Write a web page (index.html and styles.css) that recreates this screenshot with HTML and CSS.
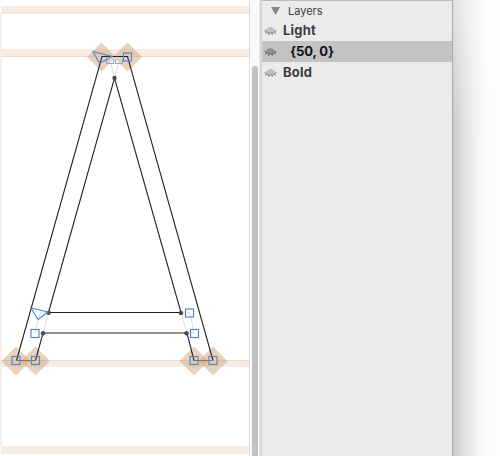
FILE: index.html
```html
<!DOCTYPE html>
<html lang="en">
<head>
<meta charset="utf-8">
<title>Glyph Editor</title>
<link rel="stylesheet" href="styles.css">
</head>
<body>
<div class="app">
  <svg class="canvas" width="249" height="456" viewBox="0 0 249 456">
    <defs>
      <path id="zone" d="M0-14.500 14.500 0 0 14.500-14.500 0z"/>
      <rect id="node" x="-4" y="-4" width="8" height="8"/>
    </defs>
    <g class="band">
      <rect x="1" y="6" width="249" height="7"/>
      <rect x="1" y="49" width="249" height="7"/>
      <rect x="1" y="361" width="249" height="6"/>
      <rect x="1" y="448" width="249" height="6"/>
    </g>
    <rect class="side" x="0" y="13" width="2" height="434"/>
    <path class="metric" d="M1 13H250M1 56.500H250M1 360.500H250M1 447H250"/>
    <g class="zones">
      <use href="#zone" x="101.500" y="57"/><use href="#zone" x="127.500" y="57"/>
      <use href="#zone" x="16" y="361"/><use href="#zone" x="35.500" y="361"/>
      <use href="#zone" x="194" y="361"/><use href="#zone" x="213" y="361"/>
    </g>
    <path class="ghost" d="M110.500 61.500 114.500 78 119 61.500M48.500 313H40L35 333M48.500 313 43 333M181 313 187 333M190 313 194 333M181 313H190M187 333H194"/>
    <path class="outline" d="M16.500 360.500 102 56.500H127.500L213 360.500M194 360.500 187 333H43L35.500 360.500M48.500 312.500 114.500 78 181 312.500Z"/>
    <path class="foot" d="M16.500 360.500H35.500M194 360.500H213"/>
    <g class="dots"><circle cx="114.500" cy="78" r="2.200"/><circle cx="48.700" cy="312.800" r="2.200"/><circle cx="181" cy="313" r="2.200"/><circle cx="43" cy="333.300" r="2.200"/><circle cx="186.500" cy="333.300" r="2.200"/></g>
    <g class="handles">
      <path class="soft" d="M106.500 57V63.500H113.500V59M115.500 59V63.500H122.500V59"/>
      <path d="M93 51.500 112 56.500 99.500 63.500ZM31 308 48 312 38 319.500Z"/>
      <use href="#node" x="127.500" y="57"/>
      <use href="#node" x="189.500" y="313"/><use href="#node" x="194.500" y="333.500"/>
      <use href="#node" x="35" y="333.500"/>
      <use href="#node" x="16" y="360.500"/><use href="#node" x="35.500" y="360.500"/>
      <use href="#node" x="194" y="360.500"/><use href="#node" x="213" y="360.500"/>
    </g>
  </svg>
  <div class="scroll"><div class="thumb"></div></div>
  <aside class="panel">
    <header class="heading"><svg class="arrow" width="9" height="8" viewBox="0 0 9 8"><path d="M0 0H9L4.500 8Z"/></svg><span>Layers</span></header>
    <div class="layer"><svg class="eye" width="13" height="10" viewBox="0 0 13 10"><path class="lid" d="M1 5Q6.500-3 12 5Q6.500 9 1 5"/><path class="lash" d="M.5 4.500Q6.500 10 12.500 4.500M2.500 6 1.500 7.700M5 7.200 4.500 9M8 7.200 8.500 9M10.500 6 11.500 7.700"/></svg><span>Light</span></div>
    <div class="layer selected"><svg class="eye" width="13" height="10" viewBox="0 0 13 10"><path class="lid" d="M1 5Q6.500-3 12 5Q6.500 9 1 5"/><path class="lash" d="M.5 4.500Q6.500 10 12.500 4.500M2.500 6 1.500 7.700M5 7.200 4.500 9M8 7.200 8.500 9M10.500 6 11.500 7.700"/></svg><span>{50, 0}</span></div>
    <div class="layer"><svg class="eye" width="13" height="10" viewBox="0 0 13 10"><path class="lid" d="M1 5Q6.500-3 12 5Q6.500 9 1 5"/><path class="lash" d="M.5 4.500Q6.500 10 12.500 4.500M2.500 6 1.500 7.700M5 7.200 4.500 9M8 7.200 8.500 9M10.500 6 11.500 7.700"/></svg><span>Bold</span></div>
  </aside>
  <div class="shadow"></div>
</div>
</body>
</html>
```

FILE: styles.css
```css
* { box-sizing: border-box; }
body { margin: 0; background: #fff; overflow: hidden; font-family: Inter, sans-serif; }
.app { display: grid; grid-template-columns: 249px 11px 193px 47px; height: 456px; }
.canvas { display: block; background: #fff; }
.band { fill: #f5ece5; }
.side { fill: #f7f0e8; }
.metric { fill: none; stroke: #ecd9c8; stroke-width: 1; }
.zones { fill: #d0a57a; fill-opacity: .5; }
.outline { fill: none; stroke: #222; stroke-width: 1.1; }
.foot { fill: none; stroke: #8c7660; stroke-width: 1; }
.ghost { fill: none; stroke: #ddd; stroke-width: 1; }
.dots { fill: #494949; }
.handles { fill: none; stroke: #4c86d0; stroke-width: 1.15; }
.soft { stroke: #94a9c8; }
.scroll { background: #fafafa; border-left: 1px solid #ddd; border-right: 1px solid #e9e9e9; padding: 66px 1px 0 2px; }
.thumb { width: 6px; height: 390px; background: #c1c1c1; border-radius: 3px 3px 0 0; }
.panel { background: #ebebeb; border-left: 2px solid #d7d7d7; border-right: 1px solid #aaa; border-top: 1px solid #bdbdbd; }
.heading { height: 19px; display: flex; align-items: center; padding-left: 9px; gap: 8px; font-size: 11px; color: #3c3c3c; letter-spacing: 0; }
.arrow { fill: #858585; }
.layer { height: 21px; display: flex; align-items: center; padding-left: 2px; gap: 6px; font-size: 13px; line-height: 21px; font-weight: 700; color: #3c3c3c; letter-spacing: .2px; }
.selected { background: #c3c3c3; gap: 13px; color: #111; letter-spacing: -.1px; }
.eye { fill: none; }
.lid { fill: #c0c0c0; }
.lash { stroke: #777; stroke-width: .9; }
.selected .lid { fill: #909090; }
.selected .lash { stroke: #5c5c5c; }
.shadow { background: linear-gradient(90deg, #c8c8c8 0, #dcdcdc 20%, #eee 43%, #fafafa 68%, #fff 100%); position: relative; }
.shadow::after { content: ""; position: absolute; inset: 0; background: linear-gradient(rgba(255,255,255,.45), transparent 140px); }
```
